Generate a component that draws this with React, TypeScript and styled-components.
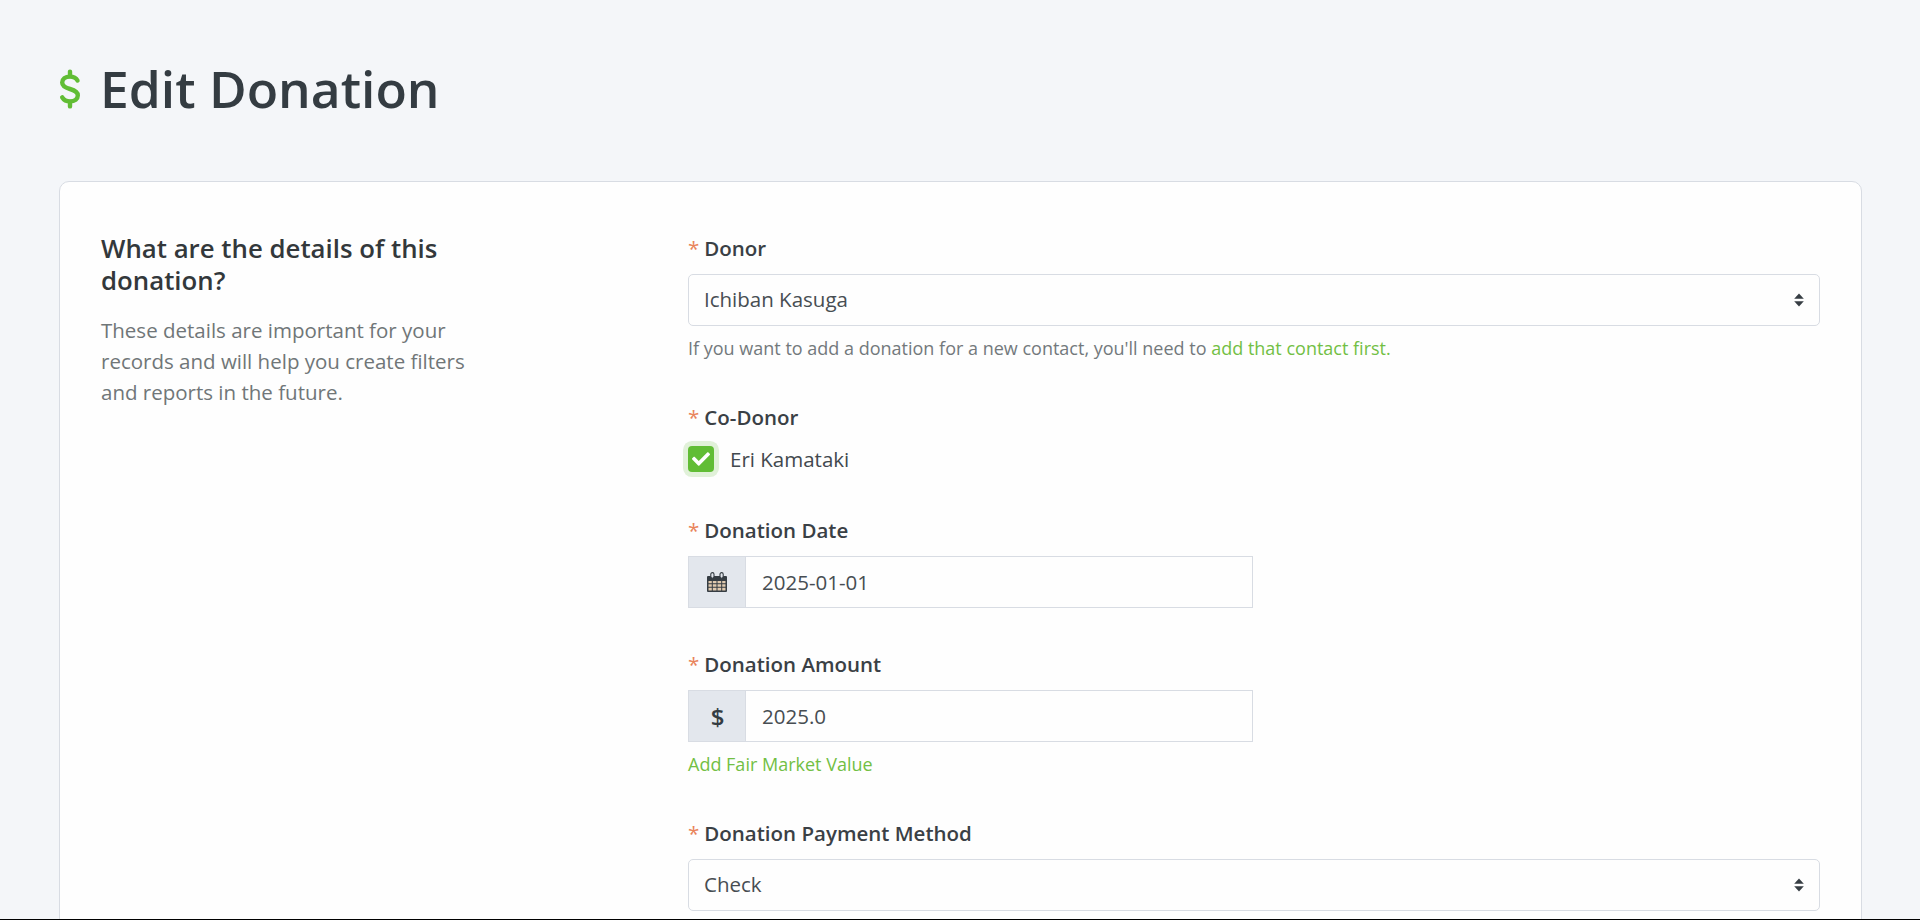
import React from "react"
import styled, { createGlobalStyle } from "styled-components"
import { FaCheck } from "react-icons/fa"

const GlobalStyle = createGlobalStyle`
  html, body {
    margin: 0;
    padding: 0;
    background: #f4f6f9;
  }
  * {
    box-sizing: border-box;
  }
`

const Page = styled.div`
  height: 920px;
  overflow: hidden;
  background: #f4f6f9;
  border-bottom: 1px solid #000;
  padding: 48px 58px 0 59px;
  font-family: "Open Sans", "Liberation Sans", sans-serif;
  color: #363d43;
`

const TitleRow = styled.div`
  display: flex;
  align-items: center;
  gap: 19px;
  height: 82px;
  margin-bottom: 51px;
`

const Title = styled.h1`
  margin: 0 0 2px;
  font-size: 51.5px;
  line-height: 80px;
  font-weight: 600;
  color: #343c42;
`

const Card = styled.div`
  display: grid;
  grid-template-columns: 399px 1fr;
  column-gap: 188px;
  background: #fefefe;
  border: 1px solid #d8dce3;
  border-radius: 10px;
  padding: 50px 41px 60px 41px;
`

const Intro = styled.div`
  color: #707678;
`

const IntroHeading = styled.h2`
  margin: 0 0 19px;
  width: 380px;
  font-size: 25.8px;
  line-height: 32px;
  font-weight: 600;
  color: #33383b;
`

const IntroText = styled.p`
  margin: 0;
  width: 380px;
  font-size: 20.5px;
  line-height: 31px;
`

const Form = styled.div`
  display: flex;
  flex-direction: column;
  padding-top: 4px;
`

const Field = styled.div<{ $after?: number }>`
  margin-bottom: ${(p) => p.$after ?? 44}px;
`

const Label = styled.div<{ $gap?: number }>`
  font-size: 20.5px;
  line-height: 24px;
  font-weight: 600;
  color: #3a4045;
  margin-bottom: ${(p) => (p.$gap ?? 12) + 2}px;
`

const Star = styled.span`
  color: #e9835a;
  font-weight: 400;
  margin-right: 5px;
`

const SelectBox = styled.div`
  display: flex;
  align-items: center;
  justify-content: space-between;
  height: 52px;
  padding: 0 15px;
  background: #fefefe;
  border: 1px solid #d8dce3;
  border-radius: 5px;
  font-size: 20.5px;
  color: #474d52;
`

const SelectText = styled.span`
  margin-bottom: 2px;
`

const Help = styled.div`
  margin-top: 9px;
  font-size: 18px;
  line-height: 26px;
  color: #73797c;
`

const GreenLink = styled.a`
  color: #72bf44;
  text-decoration: none;
`

const LinkRow = styled.div`
  margin-top: 9px;
  font-size: 18px;
  line-height: 26px;
`

const CheckRow = styled.div`
  display: flex;
  align-items: center;
  gap: 16px;
  font-size: 20.5px;
  line-height: 26px;
  color: #42494e;
`

const CheckBox = styled.span`
  display: flex;
  align-items: center;
  justify-content: center;
  width: 26px;
  height: 26px;
  background: #61bd35;
  border-radius: 4px;
  box-shadow: 0 0 0 5px #e1f1d9;
  color: #fff;
  font-size: 18px;
`

const InputGroup = styled.div`
  display: flex;
  width: 565px;
  height: 52px;
  border: 1px solid #d8dce3;
`

const Addon = styled.div`
  display: flex;
  align-items: center;
  justify-content: center;
  flex: 0 0 57px;
  background: #e3e7ed;
  border-right: 1px solid #d8dce3;
  color: #343c42;
`

const AddonSymbol = styled.span`
  padding-left: 1px;
  font-size: 24px;
  font-weight: 600;
`

const Input = styled.input`
  flex: 1;
  min-width: 0;
  border: 0;
  outline: 0;
  padding: 0 16px;
  background: #fefefe;
  font-family: inherit;
  font-size: 20.5px;
  color: #474d52;
`

const SortIcon = () => (
  <svg width="10" height="14" viewBox="0 0 10 14" fill="#363d43">
    <path d="M5 0.5 9.8 5.8H0.2Z" />
    <path d="M5 13.5 9.8 8.2H0.2Z" />
  </svg>
)

const CalendarIcon = () => (
  <svg width="20" height="21" viewBox="0 0 20 21">
    <path d="M1 4h18a1 1 0 0 1 1 1v14a1 1 0 0 1-1 1H1a1 1 0 0 1-1-1V5a1 1 0 0 1 1-1Z" fill="#363d43" />
    <path
      d="M1.500 9h3.300v2.300H1.500zM5.800 9h3.700v2.300H5.800zM10.500 9h3.700v2.300h-3.700zM15.200 9h3.300v2.300h-3.300zM1.500 12.300h3.300v2.400H1.500zM5.800 12.300h3.700v2.400H5.800zM10.500 12.300h3.700v2.400h-3.700zM15.200 12.300h3.300v2.400h-3.300zM1.500 15.700h3.300v2.800H1.500zM5.800 15.700h3.700v2.800H5.800zM10.500 15.700h3.700v2.800h-3.700zM15.200 15.700h3.300v2.800h-3.300z"
      fill="#dfc9ae"
    />
    <rect x="3.800" y="0.600" width="3.200" height="5.600" rx="1.600" fill="#e3e7ed" stroke="#363d43" strokeWidth="1.100" />
    <rect x="13" y="0.600" width="3.200" height="5.600" rx="1.600" fill="#e3e7ed" stroke="#363d43" strokeWidth="1.100" />
  </svg>
)

const DollarIcon = () => (
  <svg width="22" height="40" viewBox="0 0 22 40" fill="none" stroke="#61bd35" strokeWidth="4.400" strokeLinecap="round">
    <path d="M18.500 11.500C17 8.800 14.500 7.600 11 7.600 6.200 7.600 3.200 10 3.200 13.600 3.200 17.500 6.500 18.800 11 20 15.500 21.200 18.800 22.600 18.800 26.500 18.800 30 15.800 32.400 11 32.400 7.500 32.400 4.800 31 3.200 28.300" />
    <path d="M11 2.600V7M11 33V37.400" />
  </svg>
)

const RequiredLabel = ({ children, gap }: { children: React.ReactNode; gap?: number }) => (
  <Label $gap={gap}>
    <Star>*</Star>
    {children}
  </Label>
)

const App = () => {
  return (
    <>
      <GlobalStyle />
      <Page>
        <TitleRow>
          <DollarIcon />
          <Title>Edit Donation</Title>
        </TitleRow>
        <Card>
          <Intro>
            <IntroHeading>What are the details of this donation?</IntroHeading>
            <IntroText>
              These details are important for your records and will help you create filters and reports in the future.
            </IntroText>
          </Intro>
          <Form>
            <Field>
              <RequiredLabel>Donor</RequiredLabel>
              <SelectBox>
                <SelectText>Ichiban Kasuga</SelectText>
                <SortIcon />
              </SelectBox>
              <Help>
                If you want to add a donation for a new contact, you'll need to{" "}
                <GreenLink href="#">add that contact first.</GreenLink>
              </Help>
            </Field>
            <Field $after={46}>
              <RequiredLabel gap={15}>Co-Donor</RequiredLabel>
              <CheckRow>
                <CheckBox>
                  <FaCheck />
                </CheckBox>
                Eri Kamataki
              </CheckRow>
            </Field>
            <Field>
              <RequiredLabel>Donation Date</RequiredLabel>
              <InputGroup>
                <Addon>
                  <CalendarIcon />
                </Addon>
                <Input defaultValue="2025-01-01" />
              </InputGroup>
            </Field>
            <Field>
              <RequiredLabel>Donation Amount</RequiredLabel>
              <InputGroup>
                <Addon>
                  <AddonSymbol>$</AddonSymbol>
                </Addon>
                <Input defaultValue="2025.0" />
              </InputGroup>
              <LinkRow>
                <GreenLink href="#">Add Fair Market Value</GreenLink>
              </LinkRow>
            </Field>
            <Field>
              <RequiredLabel>Donation Payment Method</RequiredLabel>
              <SelectBox>
                <SelectText>Check</SelectText>
                <SortIcon />
              </SelectBox>
            </Field>
          </Form>
        </Card>
      </Page>
    </>
  )
}

export default App
